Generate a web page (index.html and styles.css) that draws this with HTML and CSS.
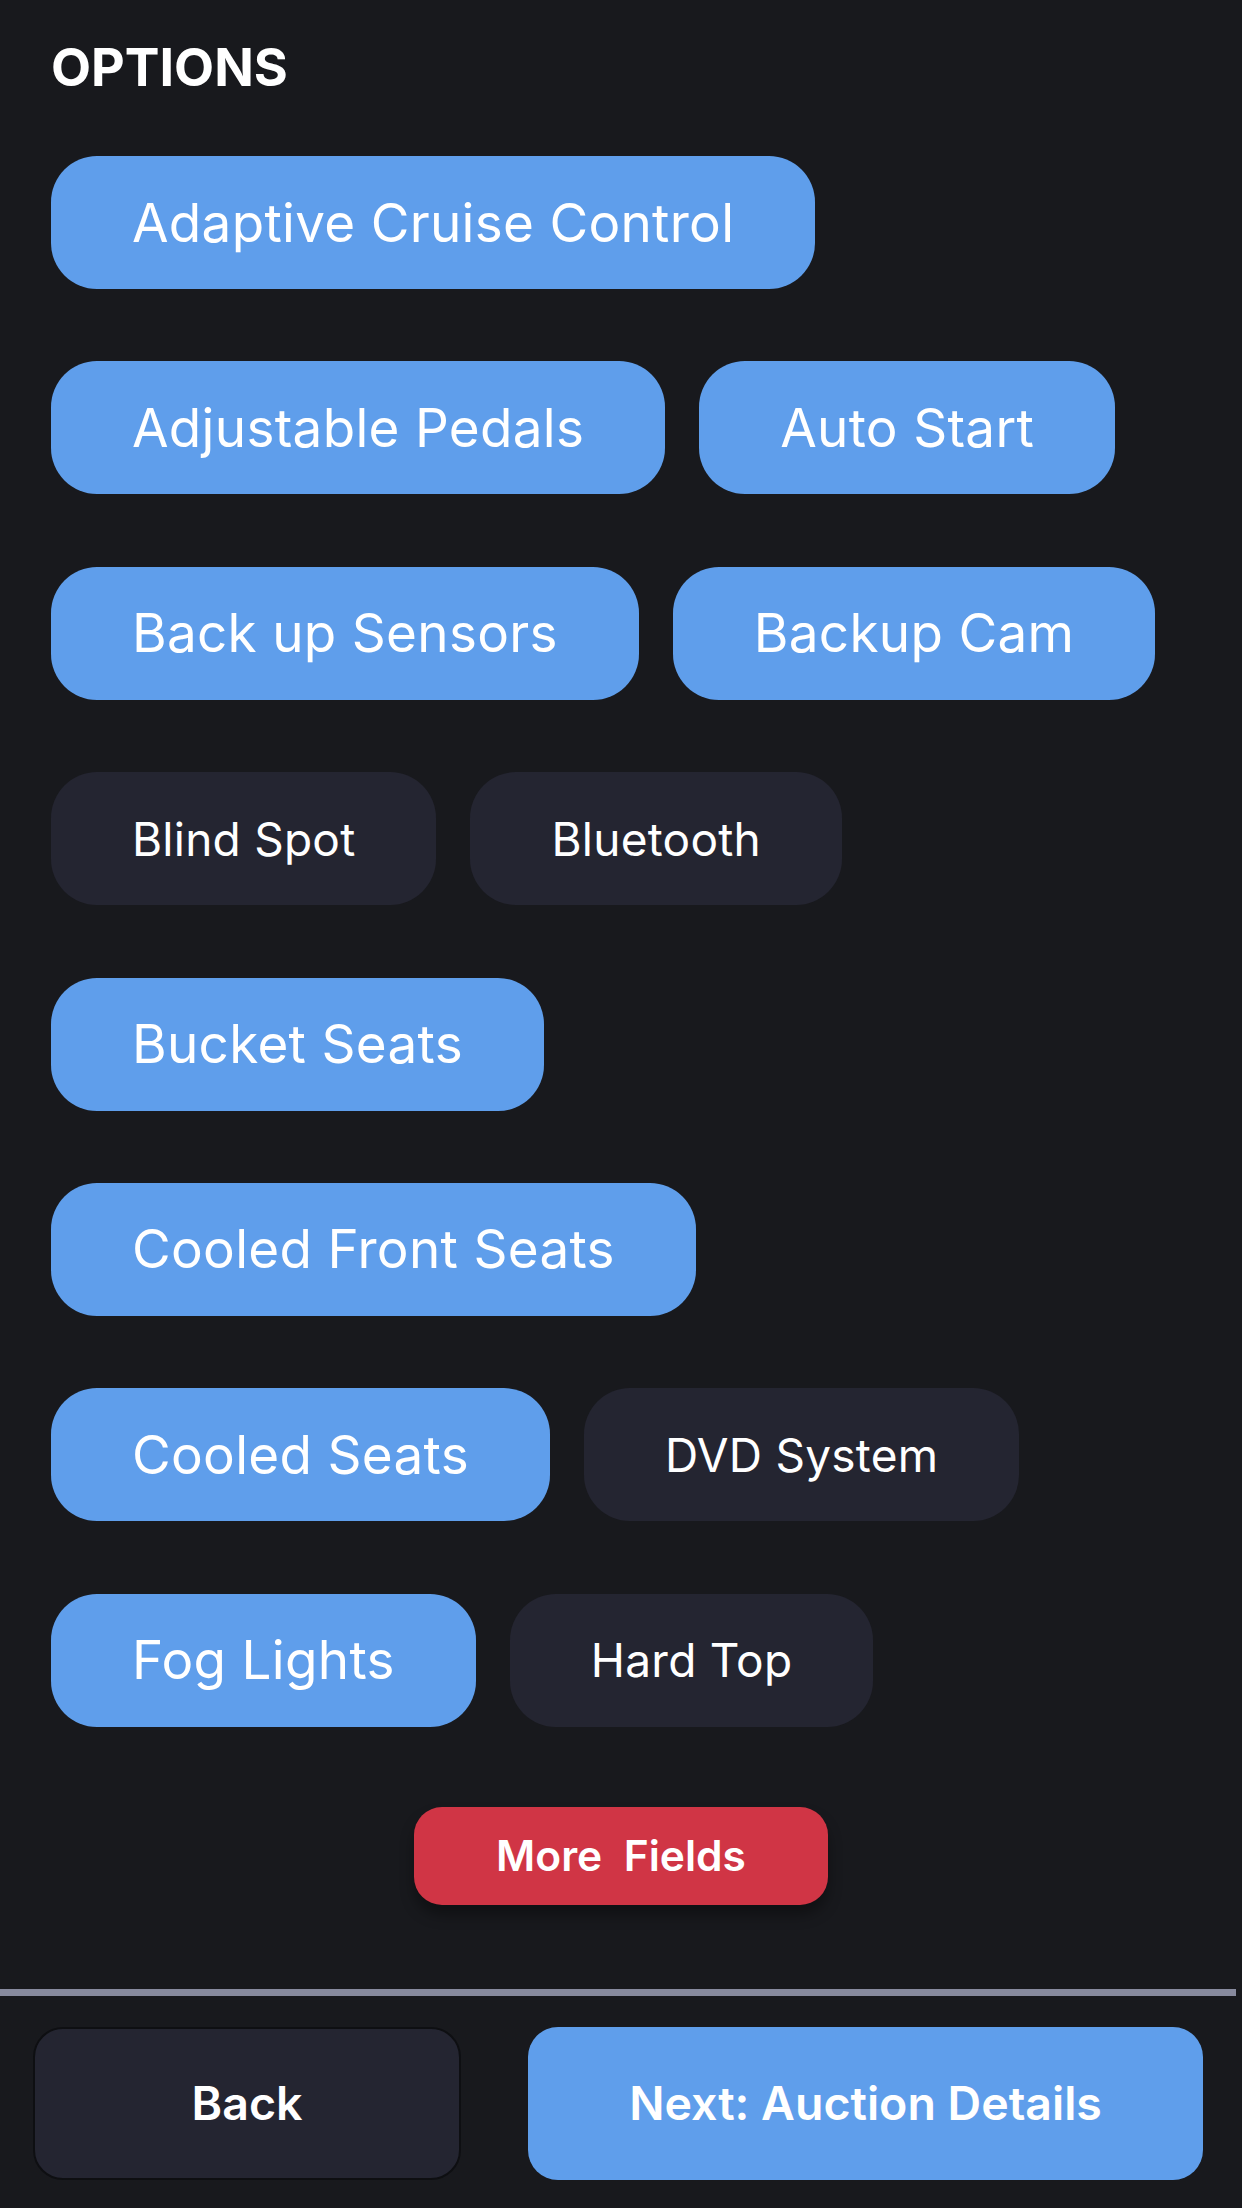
FILE: index.html
```html
<!DOCTYPE html>
<html>
<head>
<meta charset="utf-8">
<link rel="stylesheet" href="styles.css">
</head>
<body>
<main class="page">
  <h2 class="title">OPTIONS</h2>
  <div class="chips">
    <span class="chip on">Adaptive Cruise Control</span>
    <span class="chip on">Adjustable Pedals</span>
    <span class="chip on">Auto Start</span>
    <span class="chip on">Back up Sensors</span>
    <span class="chip on">Backup Cam</span>
    <span class="chip">Blind Spot</span>
    <span class="chip">Bluetooth</span>
    <span class="chip on">Bucket Seats</span>
    <span class="chip on">Cooled Front Seats</span>
    <span class="chip on">Cooled Seats</span>
    <span class="chip">DVD System</span>
    <span class="chip on">Fog Lights</span>
    <span class="chip">Hard Top</span>
  </div>
  <div class="more-wrap">
    <button class="more">More&nbsp; Fields</button>
  </div>
</main>
<div class="divider"></div>
<footer class="footer">
  <button class="btn back">Back</button>
  <button class="btn next">Next: Auction Details</button>
</footer>
</body>
</html>
```

FILE: styles.css
```css
html, body {
  margin: 0;
  padding: 0;
  background: #18191d;
  font-family: Inter, "Noto Sans", sans-serif;
  color: #ffffff;
}

.page {
  padding: 0 51px;
}

.title {
  margin: 0;
  padding-top: 40px;
  font-size: 52px;
  line-height: 56px;
  font-weight: 700;
  letter-spacing: 0;
}

.chips {
  display: flex;
  flex-wrap: wrap;
  column-gap: 34px;
  row-gap: 72.4px;
  margin-top: 60px;
}

.chip {
  display: flex;
  align-items: center;
  height: 133px;
  padding: 0 81px;
  border-radius: 46px;
  background: #242531;
  font-size: 46px;
  font-weight: 400;
  letter-spacing: 0.25px;
  box-sizing: border-box;
  white-space: nowrap;
}

.chip.on {
  background: #5f9eeb;
  font-size: 53px;
  font-weight: 400;
  letter-spacing: 0.3px;
}

.more-wrap {
  display: flex;
  justify-content: center;
  margin-top: 80px;
}

.more {
  width: 414px;
  height: 98px;
  border: none;
  border-radius: 28px;
  background: #d03545;
  color: #fff;
  font-family: Inter, "Noto Sans", sans-serif;
  font-size: 42.5px;
  font-weight: 600;
  box-shadow: 0 10px 14px rgba(0, 0, 0, 0.35);
}

.divider {
  margin-top: 84px;
  width: 1236px;
  height: 7px;
  background: #878a9e;
}

.footer {
  display: flex;
  gap: 67px;
  padding: 31px 39px 0 33px;
}

.btn {
  height: 153px;
  border-radius: 30px;
  color: #fff;
  font-family: Inter, "Noto Sans", sans-serif;
  font-size: 46.5px;
  font-weight: 600;
}

.back {
  width: 428px;
  background: #242531;
  border: 2px solid #0e0f12;
}

.next {
  width: 675px;
  background: #5f9eeb;
  border: none;
}
```
